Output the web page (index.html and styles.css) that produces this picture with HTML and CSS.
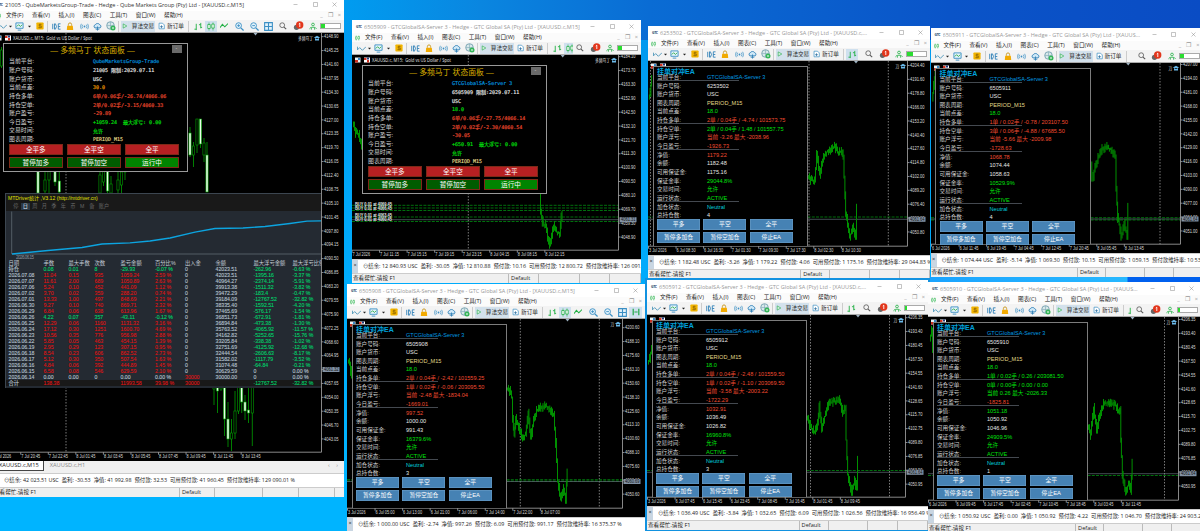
FILE: index.html
```html
<!DOCTYPE html>
<html lang="zh-CN">
<head>
    <meta charset="UTF-8">
    <meta name="viewport" content="width=device-width, initial-scale=1.0">
    <title>MetaTrader 5</title>
    <link rel="stylesheet" href="styles.css">
</head>
<body>
    <div id="desktop" class="desktop"></div>
    <script src="script.js"></script>
</body>
</html>
```

FILE: styles.css
```css
body {
    margin: 0;
    font-family: "Open Sans", "Noto Sans", "Noto Sans CJK SC", sans-serif;
    font-size: 5.6px;
    color: #222;
}

svg {
    display: block;
    flex: none;
}

.desktop {
    position: relative;
    width: 1200px;
    height: 531px;
    overflow: hidden;
    background:
        linear-gradient(90deg, #1aa4ff 0, #28b8ff 197px, #0060ee 198px) 930px 276px / 270px 7px no-repeat,
        linear-gradient(90deg, #009cf0 344px, #0a86e0 480px, #0a6cd4 650px, #0a54c8 950px, #0a4cc4 1200px) 0 0 / 100% 40px no-repeat,
        linear-gradient(#0096ec 0, #00a8fa 200px, #00b4ff 480px);
}

.window {
    position: absolute;
    display: flex;
    flex-direction: column;
    background: #f0f0f0;
    overflow: hidden;
    white-space: nowrap;
}

.window.framed {
    box-shadow: 0 0 0 2px #1292e0;
}

/* title bar */
.titlebar {
    height: 13px;
    flex: none;
    display: flex;
    align-items: center;
    background: #fff;
    color: #999;
    padding: 0 2px 0 4px;
}

.window.active .titlebar {
    color: #333;
}

.app-icon {
    width: 6px;
    font-size: 3.4px;
    font-weight: bold;
    color: #123b66;
    margin-right: 2px;
    letter-spacing: -0.3px;
}

.caption {
    flex: 1;
    overflow: hidden;
    text-overflow: ellipsis;
    font-size: 5.55px;
    line-height: 12px;
}

.win-buttons {
    display: flex;
    gap: 14.5px;
    padding: 0 5px 0 10px;
}

/* menu */
.menubar {
    height: 9px;
    flex: none;
    display: flex;
    align-items: center;
    background: #fbfbfb;
    padding: 0 3px;
    line-height: 9px;
}

.menubar .doc-icon {
    width: 10px;
}

.menubar .item {
    margin-right: 8.6px;
}

.mdi {
    margin-left: auto;
    display: flex;
    gap: 5px;
    color: #999;
}

/* toolbar */
.toolbar {
    height: 13px;
    flex: none;
    display: flex;
    align-items: center;
    background: #f3f3f3;
    border-bottom: 1px solid #aaa;
    box-sizing: border-box;
}

.tools {
    flex: 1;
    min-width: 0;
    overflow: hidden;
    display: flex;
    align-items: center;
    padding-left: 4px;
}

.tool {
    flex: none;
    height: 11px;
    display: flex;
    align-items: center;
    justify-content: center;
}

.tool.on {
    background: #cfe0ee;
}

.tool.sep {
    border-left: 1px solid #ccc;
    box-sizing: border-box;
}

.tool.algo {
    width: 34px;
    gap: 4px;
    background: #d3e1ec;
}

.tool.order {
    width: 28px;
    gap: 2px;
}

.tray {
    flex: none;
    display: flex;
    align-items: center;
    padding-right: 3px;
}

.battery {
    width: 19px;
    height: 4px;
    border: 1px solid #aaa;
    background: #fff;
}

.battery i {
    display: block;
    height: 4px;
    background: #2bdc30;
}

/* chart */
.chart {
    position: relative;
    flex: 1;
    min-height: 0;
    background: #000;
    overflow: hidden;
}

.axis-text {
    font: 5px "Liberation Sans", sans-serif;
    fill: #dcdcdc;
}

.chart-head {
    font: 5px "Open Sans", "Noto Sans CJK SC", sans-serif;
    fill: #e4e4e4;
}

.order-text {
    font: bold 5px "Liberation Sans", sans-serif;
    fill: #e8e8e8;
}

.white { color: #e6e6e6; }
.red { color: #f04c30; }
.green { color: #00e00c; }
.cyan { color: #00d0dc; }
.blue { color: #009ce0; }
.khaki { color: #e0d888; }
.orange { color: #f8a000; }

/* martingale status panel */
.panel-grid {
    position: absolute;
    left: 9.5px;
    top: 9.6px;
    width: 183px;
    height: 127.5px;
    border: 1px solid #999;
    background: #000;
}

.panel-grid .head {
    height: 13.4px;
    line-height: 13.5px;
    padding-right: 5px;
    text-align: center;
    color: #d8ae00;
    font-size: 7.8px;
    font-family: "Liberation Sans", "Noto Sans CJK SC", sans-serif;
}

.panel-grid .mini {
    position: absolute;
    right: 5px;
    top: 1px;
    width: 10px;
    height: 8px;
    background: #6a6a6a;
    color: #ddd;
    text-align: center;
    line-height: 7px;
}

.panel-grid .row,
.panel-ea .row {
    display: flex;
    align-items: center;
    height: 8.65px;
    color: #d0d0d0;
    font-size: 5.9px;
    line-height: 8px;
}

.panel-grid .row {
    padding-left: 5.5px;
}

.panel-grid .row .label {
    width: 84px;
}

.panel-grid .row .value {
    font: 5px "DejaVu Sans Mono", "Noto Sans CJK SC", monospace;
    -webkit-text-stroke: 0.15px;
}

.panel-grid .buttons {
    display: grid;
    grid-template-columns: repeat(3, 54px);
    gap: 2.4px 4.1px;
    padding: 1px 0 0 5.3px;
}

.panel-grid .btn {
    height: 10.4px;
    box-sizing: border-box;
    border: 0.5px solid #7d2a18;
    background: #b62022;
    color: #fff;
    font-size: 6.6px;
    line-height: 9.6px;
    text-align: center;
}

.panel-grid .btn.go { background: #005c00; }
.panel-grid .btn.run { background: #008400; }

/* hedge EA panel */
.panel-ea {
    position: absolute;
    left: 4.5px;
    top: 5px;
    bottom: 9.5px;
    width: 153.5px;
    border: 1px solid #7c7c7c;
    border-bottom: 0;
    background: #000;
}

.panel-ea .head {
    height: 5.6px;
    padding-left: 3.5px;
    color: #00a0dc;
    font: bold 7px/9px "Liberation Sans", "Noto Sans CJK SC", sans-serif;
}

.panel-ea .row {
    margin-left: 3.5px;
    width: 150px;
    font-family: "Liberation Sans", "Noto Sans CJK SC", sans-serif;
    font-size: 5.6px;
}

.panel-ea .row .label {
    width: 50px;
}

.panel-ea .row.rule {
    background: linear-gradient(#555c64, #555c64) 0 7px / 82px 0.8px no-repeat;
}

.panel-ea .buttons {
    display: grid;
    grid-template-columns: repeat(3, 43px);
    gap: 2.2px 3.4px;
    padding: 0 0 0 3.5px;
}

.panel-ea .btn {
    height: 10.8px;
    background: #4682b4;
    box-shadow: inset 0 0 0 0.5px #6f9fc8;
    color: #fff;
    font: 5.8px/11px "Liberation Sans", "Noto Sans CJK SC", sans-serif;
    text-align: center;
}

/* account statistics */
.stats {
    position: absolute;
    left: 12px;
    top: 159.5px;
    width: 316px;
    height: 195px;
    box-sizing: border-box;
    border-top: 1px solid #3c4650;
    border-left: 1px solid #3c4650;
    background: #242a32;
    color: #b4c0cc;
    font-family: "Liberation Sans", "Noto Sans CJK SC", sans-serif;
    font-size: 5.2px;
    overflow: hidden;
}

.stats .name {
    height: 8px;
    line-height: 8px;
    padding-left: 2px;
    background: #191919;
    color: #e2e200;
    font-size: 5.1px;
}

.stats .periods {
    height: 9px;
    display: flex;
    align-items: center;
    padding-left: 5px;
    background: #191919;
    color: #666;
}

.stats .periods span {
    width: 9.5px;
    text-align: center;
    line-height: 7px;
}

.stats .periods span.on {
    color: #e0eef8;
    background: #2a3846;
}

.stats .periods span.wide {
    width: 15px;
}

.stats table {
    border-collapse: collapse;
    table-layout: fixed;
    width: 330px;
}

.stats td,
.stats th {
    padding: 0 0 0 2.5px;
    height: 6.03px;
    line-height: 6px;
    font-weight: normal;
    text-align: left;
    white-space: nowrap;
}

.stats td {
    -webkit-text-stroke: 0.12px;
}

.stats th {
    color: #c4ced8;
    font-size: 5.3px;
}

.stats .total td {
    background: #191919;
}

.stats .up { color: #dc1414; }
.stats .down { color: #00d06a; }

/* bottom bars */
.tabs {
    height: 12px;
    flex: none;
    display: flex;
    background: #f0f0f0;
    color: #888;
    line-height: 9px;
    font-size: 5.7px;
}

.tabs .tab {
    padding: 0 4px 0 6px;
}

.tabs .tab.on {
    height: 9px;
    background: #fff;
    color: #222;
    border-right: 1px solid #444;
    border-bottom: 1px solid #444;
}

.tabs .arrows {
    margin-left: auto;
    padding-right: 6px;
    word-spacing: 5px;
}

.account {
    height: 13.5px;
    flex: none;
    display: flex;
    align-items: center;
    background: #fff;
    border-top: 1px solid #ccc;
    box-sizing: border-box;
    line-height: 12px;
}

.account .close {
    width: 6px;
    flex: none;
    height: 100%;
    background: #c9d6e2;
    text-align: center;
    line-height: 11px;
}

.account .figures {
    padding-left: 5px;
    display: flex;
    gap: 3px;
    font-size: 5.37px;
}

.status {
    height: 9.5px;
    flex: none;
    display: flex;
    background: #f0f0f0;
    border-top: 0.5px solid #ccc;
    line-height: 9px;
}

.status span {
    border-right: 1px solid #bbb;
    box-sizing: border-box;
    padding-left: 2px;
}

.status .help { width: 187px; padding-left: 1px; }
.status .profile { width: 35px; }
.status .cell { width: 48px; }
.status .cell.narrow { width: 36px; }
```

FILE: script.js
```js
const MENU = ['文件(F)', '查看(V)', '插入(I)', '图表(C)', '工具(T)', '窗口(W)', '帮助(H)'];

const svg = (body, w = 10, h = 10) =>
    `<svg width="${w}" height="${h}" viewBox="0 0 10 10" fill="none" stroke-width="1">${body}</svg>`;

const ICONS = {
    line: svg('<path d="M0.5 3v3.5L3 4l3 3 4-4" stroke="#4a94b8"/>', 9, 9),
    drop: svg('<path d="M2 3.5h6L5 7z" fill="#222"/>', 5, 5),
    profile: svg('<path d="M1 1h8v6H1z" stroke="#3b8fc4" fill="#e6f5fc"/><path d="M2 5l2-2 2 2 2-2" stroke="#28a745"/><path d="M3 9h4" stroke="#3b8fc4"/>', 9, 9),
    dollar: svg('<rect x="0.5" y="0.5" width="9" height="9" rx="1" fill="#f2b400"/><path d="M7 3H4v2h3v2H3M5 2v6" stroke="#8a6200" stroke-width=".8"/>', 8, 8),
    ide: svg('<path d="M.8 2v6M2.800 2v6h1q2.400-3 0-6zM9.500 2H7v6h2.500M7 5h2.200" stroke="#3181b8" stroke-width="1"/>', 9, 9),
    lock: svg('<path d="M3 4V2.500a2 2 0 0 1 4 0V4" stroke="#c38b00"/><path d="M1.500 4h7l.5 5.500H1z" fill="#f2aa00"/>', 8, 9),
    signal: svg('<circle cx="5" cy="5" r="1" fill="#3b8fc4"/><path d="M3 3q-1.500 2 0 4M7 3q1.500 2 0 4M1.500 2q-2 3 0 6M8.500 2q2 3 0 6" stroke="#3b8fc4" stroke-width=".8"/>', 9, 9),
    cloud: svg('<path d="M2 6.500a2 2 0 0 1 .5-3.500 3 3 0 0 1 5 0A2 2 0 0 1 8 6.500z" stroke="#3181b8" fill="#cfe8f7"/><path d="M5 5v4.500M3 8h4" stroke="#3181b8"/>', 9, 9),
    web: svg('<circle cx="4.500" cy="4.500" r="3.800" stroke="#7fa7b5" fill="#d8e8ea"/><path d="M1 4.500h7M4.500 1v7" stroke="#7fa7b5" stroke-width=".6"/><circle cx="7" cy="7" r="2.500" fill="#35b558"/><path d="M6 7h2" stroke="#fff"/>', 10, 10),
    play: svg('<path d="M2 1.500v7L8 5z" stroke="#22a948" fill="#d9f3df"/>', 6, 6),
    order: svg('<path d="M1.500 1h5L9 3.500V9H1.500z" stroke="#3b8fc4" fill="#fff"/><path d="M5 4v4M3 6h4" stroke="#22679b"/>', 7, 8),
    bars: svg('<path d="M2.500 2v7M0.500 8h2M7.500 1v6M5.500 3h2M7.500 6h1.500" stroke="#22b045"/>', 9, 9),
    candles: svg('<path d="M2.500 0v10M7.500 0v10" stroke="#22b045" stroke-width=".8"/><path d="M1 2.500h3v5H1zM6 2h3v5H6z" stroke="#22b045" fill="#fff"/>', 8, 9),
    curve: svg('<path d="M0 7l3-4 3 3 4-4" stroke="#22b045" stroke-width="1.300"/>', 8, 8),
    zoomin: svg('<circle cx="4" cy="4" r="3.200" stroke="#3b8fc4" fill="#e2f2fb"/><path d="M6.500 6.500L9.500 9.500" stroke="#3b8fc4" stroke-width="1.400"/><path d="M2.500 4h3M4 2.500v3" stroke="#3b8fc4"/>', 9, 9),
    zoomout: svg('<circle cx="4" cy="4" r="3.200" stroke="#3b8fc4" fill="#e2f2fb"/><path d="M6.500 6.500L9.500 9.500" stroke="#3b8fc4" stroke-width="1.400"/><path d="M2.500 4h3" stroke="#3b8fc4"/>', 9, 9),
    grid: svg('<path d="M.7.700h8.600v8.600H.7zM5 1v8M1 5h8" stroke="#3b8fc4" stroke-width="1.200" fill="#e2f2fb"/>', 9, 9),
    shift: svg('<path d="M1.500 1v8M8.500 1v8M3 5h4" stroke="#22a948" stroke-width="1.500"/>', 8, 8),
    search: svg('<circle cx="4" cy="4" r="3" stroke="#555"/><path d="M6.300 6.300L9 9" stroke="#555" stroke-width="1.300"/>', 8, 8),
    alert: svg('<circle cx="3" cy="6.300" r="2.600" fill="#666"/><circle cx="6.200" cy="4" r="3.700" fill="#e2361c"/><path d="M5.300 3l1-.8V6" stroke="#fff" stroke-width=".9"/>', 11, 10),
    person: svg('<circle cx="5" cy="2.500" r="1.700" stroke="#22b045"/><path d="M3 9V6h4v3M.5 8l2-2M9.500 8l-2-2" stroke="#22b045"/>', 8, 9),
    min: svg('<path d="M1 5h8" stroke="#888"/>', 5, 5),
    max: svg('<path d="M1 1h8v8H1z" stroke="#888"/>', 5, 5),
    close: svg('<path d="M1 1l8 8M9 1L1 9" stroke="#888"/>', 5, 5)
};

// [icon, cell width, pressed]
const BASE_TOOLS = [['line', 10], ['drop', 6], ['profile', 13], ['drop', 6], ['dollar', 15], ['sep', 2], ['ide', 14], ['lock', 14], ['signal', 14], ['cloud', 13], ['web', 14]];
const VIEW_TOOLS = [['curve', 14], ['zoomin', 16], ['zoomout', 14], ['grid', 14], ['shift', 13, true]];

const EA_LABELS = ['当前平台:', '账户号码:', '账户货币:', '图表周期:', '当前点差:', '持仓多单:', '持仓空单:', '账户浮亏:', '今日盈亏:', '净值:', '余额:', '可用保证金:', '保证金率:', '交易时间:', '运行状态:', '加仓状态:', '总持仓数:'];
const GRID_LABELS = ['当前平台:', '账户号码:', '账户货币:', '当前点差:', '持仓多单:', '持仓空单:', '账户盈亏:', '今日盈亏:', '交易时间:', '图表周期:'];
const GRID_COLORS = ['blue', 'white', 'white', 'green', 'red', 'red', 'red', 'green', 'green', 'khaki'];

const STATS_HEAD = ['日期', '手数', '最大手数', '次数', '盈亏金额', '百分比%', '出入金', '余额', '最大浮亏金额', '最大浮亏比例'];
const STATS = [
    '持仓|0.08|0.01|8|-29.93|-0.07 %|0|42023.51|-262.96|-0.63 %',
    '2026.07.08|11.04|0.15|935|1059.24|2.59 %|0|42023.51|-1395.16|-3.37 %',
    '2026.07.07|11.61|2.00|689|1050.89|2.63 %|0|40964.27|-2374.14|-5.91 %',
    '2026.07.06|5.24|0.10|452|441.09|1.12 %|0|39913.38|-1511.32|-3.82 %',
    '2026.07.02|3.70|0.02|359|288.20|0.74 %|0|39472.29|-183.4|-0.47 %',
    '2026.07.01|13.33|1.00|497|848.69|2.21 %|0|39184.09|-12767.52|-32.82 %',
    '2026.06.30|9.27|0.10|740|869.71|2.32 %|0|38335.40|-1592.51|-4.20 %',
    '2026.06.29|6.84|0.06|638|613.96|1.67 %|0|37465.69|-576.17|-1.54 %',
    '2026.06.26|4.22|0.07|357|-43.11|-0.12 %|0|36851.73|-672.91|-1.81 %',
    '2026.06.25|12.29|0.06|1160|1131.32|3.16 %|0|36894.84|-473.38|-1.30 %',
    '2026.06.24|17.12|0.30|1251|1600.70|4.69 %|0|35763.52|-4065.92|-11.57 %',
    '2026.06.23|10.56|0.35|776|956.98|2.88 %|0|34162.82|-5252.65|-15.76 %',
    '2026.06.22|5.85|0.05|463|454.15|1.39 %|0|33205.84|-338.38|-1.02 %',
    '2026.06.19|2.95|0.29|123|307.15|0.95 %|0|32751.69|-4125.92|-12.68 %',
    '2026.06.18|8.54|0.23|606|862.52|2.73 %|0|32444.54|-2606.63|-8.17 %',
    '2026.06.17|5.12|0.30|350|507.54|1.63 %|0|31582.02|-1117.79|-3.52 %',
    '2026.06.16|4.84|0.06|392|444.89|1.45 %|0|31074.48|-64.84|-0.21 %',
    '2026.06.15|6.58|0.08|546|629.59|2.10 %|0|30629.59|0|0.00 %',
    '2026.06.14|0.00|0.00|0|0.00|0.00 %|30000|30000.00|0|0.00 %',
    '合计|138.38|||11993.58|39.98 %|30000||-12767.52|-32.82 %'
];

// x, wick top, wick bottom, body top, body bottom, filled
const CANDLES = [
    [1.5, 47, 68, 50, 66, 0],
    [38, 165, 193, 171, 193, 1], [45, 165, 193, 180, 191, 0], [49, 165, 193, 170, 180, 0], [55, 165, 186, 168, 182, 1], [59.3, 172, 193, 181, 192, 1],
    [100, 165, 193, 175, 193, 0], [103.500, 165, 186, 168, 182, 0], [107.500, 165, 193, 171, 191, 1], [111, 176, 193, 184, 193, 0], [118, 168, 193, 180, 190, 0], [121.500, 165, 193, 172, 185, 0], [125, 165, 180, 165, 172, 0],
    [190, 127, 157, 133, 155, 1], [193.500, 142, 167, 146, 155, 0], [197, 119, 153, 119, 145, 0], [200.500, 119, 148, 119, 144, 1], [204, 138, 162, 143, 155, 0], [207, 142, 192, 155, 192, 1],
    [214, 380, 405, 380, 389, 0], [217.500, 380, 413, 387, 391, 1], [221, 380, 391, 380, 389, 0], [224.500, 380, 436, 387, 419, 1], [228, 402, 447, 419, 439, 1],
    [231.500, 419, 451, 433, 439, 0], [235, 391, 439, 411, 433, 0], [238.500, 380, 414, 387, 411, 0], [241.700, 380, 413, 387, 402, 1], [245, 395, 420, 402, 411, 1], [248.500, 387, 423, 410, 413, 1], [252.300, 380, 446, 387, 413, 0]
];

const WINDOWS = [
    {
        x: -7, y: -2, w: 351, h: 499, active: true, tabs: true, charge: 0.2,
        title: '21005 - QubeMarketsGroup-Trade - Hedge - Qube Markets Group (Pty) Ltd - [XAUUSD.c,M15]',
        views: [['bars', 14], ['candles', 12, true], ...VIEW_TOOLS.slice(0, 4)],
        account: ['42 023.51', '-30.53', '41 992.98', '32.53', '41 960.45', '129 090.01'],
        price: [4148.90, 3.65, 30, 36.7], tag: [369.500, '4061.32'],
        times: [-6.800, '7 Jul 2026', '7 Jul 20:45', '7 Jul 22:45', '8 Jul 01:45', '8 Jul 03:45', '8 Jul 05:45', '8 Jul 07:45', '8 Jul 09:45', '8 Jul 11:45', '8 Jul 13:45'],
        vlines: [66], hlines: [], marker: 255.500, candles: CANDLES,
        grid: ['QubeMarketsGroup-Trade', '21005 限制:2029.07.11', 'USC', '30.0', '6单/0.06手/-26.74/4066.06', '2单/0.02手/-3.15/4060.33', '-29.89', '+1059.24&nbsp; 最大浮亏: 0.00', '允许', 'PERIOD_M15'],
        stats: true
    },
    {
        x: 352, y: 20, w: 289, h: 263, charge: 0.2,
        title: '6505909 - GTCGlobalSA-Server 3 - Hedge - GTC Global SA (Pty) Ltd - [XAUUSD.c,M15]',
        views: [['bars', 14], ['candles', 12, true]],
        account: ['12 840.93', '-30.05', '12 810.88', '10.16', '12 800.72', '126 091.01'],
        price: [4184.10, 10.4, 14, 56.7], tag: [219.700, '4061.31'],
        times: [352, '7 Jul 2026', '7 Jul 11:15', '7 Jul 15:15', '7 Jul 19:15', '7 Jul 23:15', '8 Jul 04:15', '8 Jul 08:15', '8 Jul 12:15'],
        vlines: [468.300], hlines: [205.300, 208, 210.500, 217, 221.500], quote: 219.700, marker: 562.700,
        lines: [[[353, 122], [356, 133], [359, 135], [362, 148]], [[540, 190], [541, 213], [543.500, 226], [546, 225], [548, 240], [550, 246], [552, 235], [554, 226], [557, 232], [560, 234], [561.500, 214], [562.500, 218]]],
        orders: true,
        grid: ['GTCGlobalSA-Server 3', '6505909 限制:2029.07.11', 'USC', '18.0', '6单/0.06手/-27.75/4066.14', '2单/0.02手/-2.30/4060.54', '-30.05', '+650.91&nbsp; 最大浮亏: 0.00', '允许', 'PERIOD_M15']
    },
    {
        x: 347, y: 284, w: 298, h: 257, noTray: true,
        title: '6505908 - GTCGlobalSA-Server 3 - Hedge - GTC Global SA (Pty) Ltd - [XAUUSD.c,M15]',
        views: [['bars', 14], ['candles', 12, true], ...VIEW_TOOLS],
        account: ['1 000.00', '-2.74', '997.26', '6.09', '991.17', '16 375.37'],
        price: [4200.60, 12.5, 13, 327.7], tag: [481.500, '4060.69'],
        times: [347.500, '3 Jul 2026', '6 Jul 05:00', '6 Jul 13:00', '6 Jul 21:00', '7 Jul 06:00', '7 Jul 14:00', '7 Jul 22:00', '8 Jul 07:00'],
        vlines: [520.300, 599.300], hlines: [479.700, 481], quote: 481.500, marker: 567.500,
        lines: [[[348, 360], [350, 364], [352, 378]], [[507, 388], [510, 391], [512, 398], [513, 420], [514.500, 436], [516, 420], [519, 427], [523, 440], [526, 433], [528.500, 412], [531, 438], [534, 421], [537, 411], [540, 409], [546, 406], [551, 410], [554, 415], [556, 443], [558, 482], [561, 500], [564, 490], [566, 500], [567.500, 470]]],
        ea: ['6505908', '2单 / 0.04手 / -2.42 / 101559.25', '1单 / 0.02手 / -0.06 / 203095.50', '当前 -2.48 最大 -1834.04', '-1669.01', '997.52', '1000.00', '991.43', '16379.6%', '3'],
        eaColors: ['red', 'red', 'red', 'red']
    },
    {
        x: 648, y: 26, w: 282, h: 253, charge: 0.3,
        title: '6253502 - GTCGlobalSA-Server 3 - Hedge - GTC Global SA (Pty) Ltd - [XAUUSD.c,M15]',
        views: [['bars', 12, true]],
        account: ['1 182.48', '-3.26', '1 179.22', '4.06', '1 175.16', '29 044.83'],
        price: [4204.40, 12.8, 13, 65.5], tag: [219.300, '4061.64'],
        times: [648.500, '3 Jul 2026', '6 Jul 08:30', '6 Jul 16:30', '7 Jul 01:30', '7 Jul 09:30', '7 Jul 17:30', '8 Jul 02:30', '8 Jul 10:30'],
        vlines: [650.500, 809, 888.300], hlines: [217], quote: 219.300, marker: 856,
        lines: [[[649, 98], [650.500, 92], [652, 80]], [[808, 176], [811, 180], [815, 182], [817, 155], [820, 175], [823, 160], [827, 152], [831, 149], [835, 146], [838, 153], [841, 152], [843.500, 157], [844.500, 178], [846, 213], [848, 225], [850, 238], [853, 226], [856, 236], [857, 207]]],
        ea: ['6253502', '2单 / 0.04手 / -4.74 / 101573.75', '2单 / 0.04手 / 1.48 / 101557.75', '当前 -3.26 最大 -2038.96', '-1926.73', '1179.22', '1182.48', '1175.16', '29044.8%', '4'],
        eaColors: ['red', 'green', 'red', 'red']
    },
    {
        x: 647, y: 280, w: 281, h: 250, charge: 0.12, framed: true,
        title: '6505912 - GTCGlobalSA-Server 3 - Hedge - GTC Global SA (Pty) Ltd - [XAUUSD.c,M15]',
        views: [['bars', 12]],
        account: ['1 036.49', '-3.84', '1 032.65', '6.09', '1 026.56', '16 956.49'],
        price: [4206.35, 12.95, 13, 317.7], tag: [472.300, '4061.64'],
        times: [647.500, '3 Jul 2026', '6 Jul 07:45', '6 Jul 15:45', '6 Jul 23:45', '7 Jul 08:45', '7 Jul 16:45', '8 Jul 01:45', '8 Jul 09:45'],
        vlines: [810.500, 889.500], hlines: [470.500], quote: 472.300, marker: 858,
        lines: [[[648, 363], [650, 358], [652, 350]], [[807, 416], [811, 428], [815, 433], [818, 425], [819.500, 405], [822, 430], [826, 412], [829, 402], [835, 402], [840, 401], [843, 413], [845.500, 408], [846.500, 440], [848, 475], [852, 492], [855, 480], [857, 490], [858, 460]]],
        ea: ['6505912', '2单 / 0.04手 / -2.48 / 101559.50', '1单 / 0.02手 / -1.10 / 203069.50', '当前 -3.58 最大 -2003.22', '-1722.29', '1032.91', '1036.49', '1026.82', '16960.8%', '3'],
        eaColors: ['red', 'red', 'red', 'red']
    },
    {
        x: 930.5, y: 28, w: 272, h: 249, charge: 0.25,
        title: '6505911 - GTCGlobalSA-Server 3 - Hedge - GTC Global SA (Pty) Ltd - [XAUUSD.c,M15]',
        views: [],
        account: ['1 074.44', '-5.14', '1 069.30', '10.15', '1 059.15', '10 534.97'],
        price: [4207.00, 13, 13, 64.5], tag: [219, '4061.64'],
        times: [931, '6 Jul 2026', '6 Jul 11:45', '6 Jul 19:45', '7 Jul 04:45', '7 Jul 12:45', '7 Jul 20:45', '8 Jul 05:45', '8 Jul 13:45'],
        vlines: [1159.500], hlines: [217.700, 220], quote: 219, marker: 1127.700,
        lines: [[[932, 100], [933.500, 85], [935, 72]], [[1090.700, 162], [1092, 180], [1095, 168], [1098, 158], [1102, 150], [1106, 147], [1111, 150], [1115, 155], [1116, 190], [1117.500, 218], [1119, 225], [1121, 238], [1124, 225], [1127, 236], [1127.700, 207]]],
        ea: ['6505911', '1单 / 0.02手 / -0.78 / 203107.50', '3单 / 0.06手 / -4.88 / 67685.50', '当前 -5.66 最大 -2009.98', '-1728.63', '1068.78', '1074.44', '1058.63', '10529.9%', '4'],
        eaColors: ['red', 'red', 'red', 'red']
    },
    {
        x: 928, y: 282, w: 273, h: 251, charge: 0.12,
        title: '6505910 - GTCGlobalSA-Server 3 - Hedge - GTC Global SA (Pty) Ltd - [XAUUSD.c,M15]',
        views: [['bars', 12]],
        account: ['1 050.92', '0.00', '1 050.92', '4.22', '1 046.70', '24 903.26'],
        price: [4206.35, 12.95, 13, 319.5], tag: [473.700, '4061.64'],
        times: [928.500, '6 Jul 2026', '6 Jul 09:45', '6 Jul 17:45', '7 Jul 02:45', '7 Jul 10:45', '7 Jul 18:45', '8 Jul 03:45', '8 Jul 11:45'],
        vlines: [1164.500], hlines: [475.500], quote: 473.700, marker: 1132.500,
        lines: [[[930, 340], [932, 330], [933, 348]], [[1088, 425], [1091, 435], [1094, 408], [1097, 432], [1100, 415], [1104, 404], [1110, 402], [1116, 406], [1119, 413], [1120.500, 412], [1121, 440], [1122.700, 475], [1126, 494], [1129, 482], [1131, 490], [1132.500, 462]]],
        ea: ['6505910', '1单 / 0.02手 / 0.26 / 203081.50', '0单 / 0.00手 / 0.00 / 0.00', '当前 0.26 最大 -2026.33', '-1825.81', '1051.18', '1050.92', '1046.96', '24909.5%', '1'],
        eaColors: ['green', 'green', 'green', 'red'], equity: 'green'
    }
];

const tool = ([icon, width, on]) =>
    `<div class="tool ${icon === 'sep' ? 'sep' : ''} ${on ? 'on' : ''}" style="width:${width}px">${ICONS[icon] || ''}</div>`;

// price bars along a guide line, one every 0.9px
function priceBars(points) {
    let d = '';
    let n = 3;
    for (let i = 1; i < points.length; i++) {
        const [x0, y0] = points[i - 1];
        const [x1, y1] = points[i];
        const steps = Math.max(1, Math.round((x1 - x0) / 0.9));
        for (let s = 0; s < steps; s++) {
            n = (n * 37 + 11) % 101;
            const a = y0 + (y1 - y0) * s / steps;
            const b = y0 + (y1 - y0) * (s + 1) / steps;
            const x = x0 + (x1 - x0) * (s + 0.5) / steps;
            const up = Math.min(a, b) - 0.5 - (n % 7) * 0.9;
            const down = Math.max(a, b) + 0.5 + (n % 5) * 1.1;
            d += `M${x.toFixed(1)} ${up.toFixed(1)}V${down.toFixed(1)}`;
        }
    }
    return `<path d="${d}" stroke="#009000" stroke-width="1"/>`;
}

function chartSvg(win) {
    const top = win.y + 35;
    const h = win.h - 35 - (win.tabs ? 12 : 0) - 23;
    const ax = win.x + win.w - 22.5;
    const ay = top + h - 9.8;
    let out = '';

    win.vlines.forEach(x => {
        out += `<path d="M${x} ${top}V${ay}" stroke="#999" stroke-width=".8" stroke-dasharray="1.500 1.500"/>`;
    });
    win.hlines.forEach(y => {
        out += `<path d="M${win.x} ${y}H${ax}" stroke="#008c10" stroke-width=".8" stroke-dasharray="3 1.200"/>`;
    });
    if (win.quote) out += `<path d="M${win.x} ${win.quote}H${ax}" stroke="#70808c" stroke-width=".6"/>`;
    (win.lines || []).forEach(points => { out += priceBars(points); });
    (win.candles || []).forEach(([x, t, b, bt, bb, full]) => {
        out += `<path d="M${x} ${t}V${b}" stroke="#00a000" stroke-width=".8"/>`;
        out += `<rect x="${x - 1.1}" y="${bt}" width="2.2" height="${bb - bt}" fill="${full ? '#e8ffe8' : '#000'}" stroke="#00a000" stroke-width=".6"/>`;
    });
    if (win.orders) {
        [204.5, 208.5, 215.5, 219.5].forEach((y, i) => {
            out += `<text class="order-text" x="355" y="${y + 1.5}" textLength="37" lengthAdjust="spacingAndGlyphs">BUY 0.01 at 40${69 - i * 3}.45</text>`;
        });
    }

    out += `<path d="M${win.x} ${ay}H${ax}V${top}" stroke="#aaa" stroke-width=".8" fill="none"/>`;
    const [p0, step, count, y0] = win.price;
    const [tagY, tagText] = win.tag;
    for (let i = 0; i < count; i++) {
        const y = y0 + i * 13.87;
        out += `<path d="M${ax} ${y}h2" stroke="#aaa" stroke-width=".8"/>`;
        out += `<text class="axis-text" x="${ax + 2.5}" y="${y + 1.7}" textLength="14.5" lengthAdjust="spacingAndGlyphs">${(p0 - step * i).toFixed(2)}</text>`;
    }
    out += `<rect x="${ax + 1}" y="${tagY - 2.5}" width="17" height="5" fill="#8292a4"/>`;
    out += `<text class="axis-text" x="${ax + 2.5}" y="${tagY + 1.7}" textLength="14.5" lengthAdjust="spacingAndGlyphs" style="fill:#111">${tagText}</text>`;

    win.times.slice(1).forEach((t, i) => {
        const x = win.times[0] + i * 27.55;
        out += `<path d="M${x} ${ay}v2.500" stroke="#aaa" stroke-width=".8"/>`;
        out += `<text class="axis-text" x="${x + 0.5}" y="${ay + 6}" textLength="${t.length > 10 ? 19 : 17.5}" lengthAdjust="spacingAndGlyphs">${t}</text>`;
    });
    out += `<path d="M${win.marker - 2} ${top}h4l-2 2.500z" fill="#a0b4c4"/>`;
    return `<svg width="${win.w}" height="${h}" viewBox="${win.x} ${top} ${win.w} ${h}">${out}</svg>`;
}

// symbol caption, drawn at the top of the chart
function chartHead(win) {
    const label = win.grid ? '多频马丁' : '刀';
    const x = win.w - 28;
    return `<svg width="${win.w}" height="10" viewBox="0 0 ${win.w} 10" style="position:absolute;left:0;top:0">
        <rect x="3" y="2.500" width="5.500" height="5" fill="#e8f0f4"/><path d="M3 5h3v2.500H3z" fill="#d03020"/><path d="M6 3h2v2H6z" fill="#3a88c8"/>
        <rect x="12" y="2.500" width="6" height="5" fill="#fff"/><path d="M12 3h2.500v2H12zM15 5h2v2.500h-2z" fill="#d03020"/><path d="M15 2.500h2v2h-2z" fill="#203c80"/>
        ${win.grid ? '<text class="chart-head" x="20" y="6.800" textLength="79" lengthAdjust="spacingAndGlyphs">XAUUSD.c, M15: &#160;Gold vs US Dollar / Spot</text>' : ''}
        <text class="chart-head" x="${x - 3}" y="6.800" textLength="${win.grid ? 15 : 3.5}" lengthAdjust="spacingAndGlyphs" text-anchor="end">${label}</text>
        <path d="M${x - 2} 4.500l3-1.800 3 1.800-3 1.500zM${x - 1} 5v2.500h4V5" fill="#6ab8e8"/>
    </svg>`;
}

function gridPanel(win) {
    const rows = GRID_LABELS.map((label, i) => {
        const color = i === 3 && win.stats ? 'orange' : GRID_COLORS[i];
        return `<div class="row"><span class="label">${label}</span><span class="value ${color}">${win.grid[i]}</span></div>`;
    }).join('');
    return `<div class="panel-grid">
        <div class="head">— 多频马丁 状态面板 —</div><div class="mini">-</div>
        ${rows}
        <div class="buttons">
            <div class="btn">全平多</div><div class="btn">全平空</div><div class="btn">全平</div>
            <div class="btn go">暂停加多</div><div class="btn go">暂停加空</div><div class="btn run">运行中</div>
        </div>
    </div>`;
}

function eaPanel(win) {
    const v = win.ea;
    const c = win.eaColors;
    const values = [
        ['GTCGlobalSA-Server 3', 'blue'], [v[0], 'white'], ['USC', 'white'], ['PERIOD_M15', 'khaki'], ['18.0', 'green'],
        [v[1], c[0]], [v[2], c[1]], [v[3], c[2]], [v[4], c[3]], [v[5], win.equity || 'red'],
        [v[6], 'white'], [v[7], 'white'], [v[8], 'green'], ['允许', 'green'], ['ACTIVE', 'green'], ['Neutral', 'cyan'], [v[9], 'white']
    ];
    const rows = values.map(([text, color], i) =>
        `<div class="row ${[0, 5, 8, 14].includes(i) ? 'rule' : ''}"><span class="label">${EA_LABELS[i]}</span><span class="${color}">${text}</span></div>`
    ).join('');
    const buttons = ['平多', '平空', '全平', '暂停多加仓', '暂停空加仓', '停止EA'].map(b => `<div class="btn">${b}</div>`).join('');
    return `<div class="panel-ea"><div class="head">挂单对冲EA</div>${rows}<div class="buttons">${buttons}</div></div>`;
}

function statsPanel() {
    const widths = [35, 25, 26, 26, 34.5, 30, 30.5, 38, 39, 46];
    const rows = STATS.map(line => {
        const cells = line.split('|');
        const zero = cells[0] === '2026.06.14';
        const open = cells[0] === '持仓';
        const trend = zero ? '' : open || cells[4].startsWith('-') ? 'down' : 'up';
        const tds = cells.map((text, i) => {
            let cls = '';
            if (i >= 1 && i <= 5) cls = trend;
            if (i === 6 && text === '30000') cls = 'up';
            if (i >= 8 && text.startsWith('-')) cls = 'down';
            return `<td class="${cls}">${text}</td>`;
        }).join('');
        return `<tr class="${cells[0] === '合计' ? 'total' : ''}">${tds}</tr>`;
    }).join('');
    const periods = ['停', '日', '周', '月', '季', '年', '币', 'M', '备'].map(p => `<span class="${p === '日' ? 'on' : ''}">${p}</span>`).join('');
    return `<div class="stats">
        <div class="name">MTDriver统计 ,V3.12 (http://mtdriver.cn)</div>
        <div class="periods">${periods}<span class="wide">账户</span></div>
        <svg width="315" height="49.5" viewBox="6 210.5 315 49.5" fill="none">
            <path d="M11.700 211v42.500H321" stroke="#68727c" stroke-width=".7"/>
            <path d="M12 253.500L48 250l34-3 20-3.500 28-1.200 20-1.800 20-3 25-5.800 20-3.700 28-.5 22-1.500 25-3 17-2.300 14-.4" stroke="#0ca4e0" stroke-width="1.300"/>
            <text x="16" y="258" font-size="4.500" fill="#8a949e" textLength="18">2026.06.15</text>
        </svg>
        <table>
            <colgroup>${widths.map(w => `<col style="width:${w}px">`).join('')}</colgroup>
            <tr>${STATS_HEAD.map(h => `<th>${h}</th>`).join('')}</tr>
            ${rows}
        </table>
    </div>`;
}

function renderWindow(win) {
    const [balance, profit, equity, margin, free, level] = win.account;
    const tray = win.noTray ? '' : `<div class="tray">${tool(['search', 14])}${tool(['alert', 16])}${tool(['person', 14])}<div class="battery"><i style="width:${win.charge * 19}px"></i></div></div>`;
    return `<section class="window ${win.active ? 'active' : ''} ${win.framed ? 'framed' : ''}" style="left:${win.x}px;top:${win.y}px;width:${win.w}px;height:${win.h}px">
        <header class="titlebar">
            <span class="app-icon">GTC</span><span class="caption">${win.title}</span>
            <div class="win-buttons">${ICONS.min}${ICONS.max}${ICONS.close}</div>
        </header>
        <nav class="menubar"><span class="doc-icon">${ICONS.candles.replace('width="8" height="9"', 'width="5" height="6"')}</span>${MENU.map(m => `<span class="item">${m}</span>`).join('')}<span class="mdi"><span>_</span><span>❐</span><span>×</span></span></nav>
        <div class="toolbar">
            <div class="tools">
                ${BASE_TOOLS.map(tool).join('')}
                <div class="tool sep" style="width:3px"></div>
                <div class="tool algo">${ICONS.play}<span>算法交易</span></div>
                <div class="tool order" style="margin:0 3px 0 2px">${ICONS.order}<span>新订单</span></div>
                <div class="tool sep" style="width:3px"></div>
                ${win.views.map(tool).join('')}
            </div>
            ${tray}
        </div>
        <div class="chart">${chartSvg(win)}${chartHead(win)}${win.grid ? gridPanel(win) : eaPanel(win)}${win.stats ? statsPanel() : ''}</div>
        ${win.tabs ? '<div class="tabs"><span class="tab on">XAUUSD.c,M15</span><span class="tab">XAUUSD.c,H1</span><span class="arrows">‹ ›</span></div>' : ''}
        <div class="account"><span class="close">×</span><div class="figures"><span>⊖结余: ${balance} USC</span><span>盈利: ${profit}</span><span>净值: ${equity}</span><span>预付款: ${margin}</span><span>可用预付款: ${free}</span><span>预付款维持率: ${level} %</span></div></div>
        <footer class="status"><span class="help">查看帮忙,请按 F1</span><span class="profile">Default</span><span class="cell"></span><span class="cell narrow"></span><span class="cell narrow"></span></footer>
    </section>`;
}

document.getElementById('desktop').innerHTML = WINDOWS.map(renderWindow).join('');
```
